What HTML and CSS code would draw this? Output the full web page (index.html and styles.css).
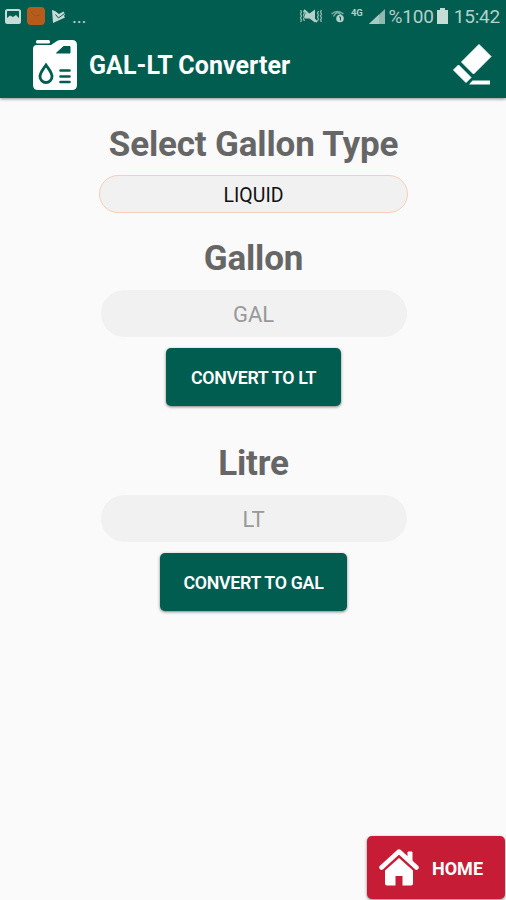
FILE: index.html
```html
<!DOCTYPE html>
<html lang="en">
<head>
  <meta charset="UTF-8">
  <meta name="viewport" content="width=device-width, initial-scale=1.0">
  <title>GAL-LT Converter</title>
  <link rel="stylesheet" href="styles.css">
</head>
<body>
  <header>
    <div class="status">
      <svg class="st-photo" width="16" height="15" viewBox="0 0 16 15"><rect x="1" y="1" width="14" height="13" rx="1.500" fill="none" stroke="#c5dcd7" stroke-width="2"/><path d="M2 9l3-2.500 3 1.500 3-2 3 3v5H2z" fill="#c5dcd7"/></svg>
      <svg class="st-app" width="18" height="18" viewBox="0 0 18 18"><rect width="18" height="18" rx="4" fill="#b75b1a"/><path d="M4 5l4 4 5-1" fill="none" stroke="#8b5a2b" stroke-width="1"/></svg>
      <svg class="st-play" width="14" height="15" viewBox="0 0 14 15"><path d="M0 1l3 1 4 3L11.500 2.500 13 5l-1 2 1 1.500L1 14z" fill="#c5dcd7"/><path d="M3.500 5.500L6.500 9l6-4.500" fill="none" stroke="#005d50" stroke-width="1"/></svg>
      <span class="dots">...</span>
      <span class="grow"></span>
      <svg class="st-mute" width="24" height="16" viewBox="0 0 24 16"><g fill="none" stroke="#8fb8b0" stroke-width="1.300"><path d="M1.500 2l1 2-1 2 1 2-1 2 1 2-1 2M4.500 3l1 2-1 2 1 2-1 2 1 2M19.500 3l-1 2 1 2-1 2 1 2-1 2M22.500 2l-1 2 1 2-1 2 1 2-1 2 1 2"/></g><path d="M6 5.500h4.500L16 1.500v13L10.500 10.500H6z" fill="#b3d0ca"/><path d="M5 2l13 12" stroke="#b3d0ca" stroke-width="2"/></svg>
      <svg class="st-wifi" width="14" height="13" viewBox="0 0 14 13"><g fill="none" stroke="#7fada5" stroke-width="1.500"><path d="M.5 4Q6.500-.8 12.500 4M2.500 6.500Q6-.2 10 5"/></g><circle cx="9" cy="8.500" r="3.800" fill="#b3d0ca"/><path d="M8 7h1.500v3.500" fill="none" stroke="#005d50"/></svg>
      <span class="net">4G</span>
      <svg class="st-signal" width="16" height="15" viewBox="0 0 16 15"><path d="M16 0v15H0z" fill="#8fb8b0"/><path d="M10 5.600V15H0z" fill="#a9cac3"/></svg>
      <span class="percent">%100</span>
      <svg class="st-battery" width="11" height="16" viewBox="0 0 11 16"><path d="M3 0h5v2h3v14H0V2h3z" fill="#c5dcd7"/></svg>
      <span class="clock">15:42</span>
    </div>
    <div class="toolbar">
      <svg class="jug" width="46" height="52" viewBox="0 0 46 52">
        <rect x="4" y="1" width="14" height="3.500" rx="1.500" fill="#fff"/>
        <path d="M5 6h14l6-4q1.500-1 3.500-1H40q5 0 5 5V46q0 5-5 5H6q-5 0-5-5V10q0-4 4-4z" fill="#fff"/>
        <path d="M24.500 14l7-6.500H38V14z" fill="#005d50" stroke="#005d50" stroke-linejoin="round"/>
        <path d="M14 26c3 4.500 6 7.500 6 11.500a6 6 0 0 1-12 0c0-4 3-7 6-11.500z" fill="none" stroke="#005d50" stroke-width="2.800"/>
        <path d="M28.500 31.500H37.500M28.500 37.500H37.500M28.500 43H37.500" stroke="#005d50" stroke-width="2.600" stroke-linecap="round"/>
      </svg>
      <h1>GAL-LT Converter</h1>
      <svg class="eraser" width="40" height="42" viewBox="0 0 40 42">
        <path d="M27 1.500L39 13.500 21.500 31 9.500 19z" fill="#fff" stroke="#fff" stroke-linejoin="round"/>
        <path d="M6.500 22L19 34.500l-5 5L1.500 27z" fill="#fff" stroke="#fff" stroke-linejoin="round"/>
        <path d="M20.500 37.500H38v4H17z" fill="#fff"/>
      </svg>
    </div>
  </header>

  <main>
    <h2>Select Gallon Type</h2>
    <button class="type">LIQUID</button>

    <h2 class="gallon">Gallon</h2>
    <input type="text" placeholder="GAL">
    <button class="convert to-lt">CONVERT TO LT</button>

    <h2 class="litre">Litre</h2>
    <input type="text" placeholder="LT">
    <button class="convert to-gal">CONVERT TO GAL</button>
  </main>

  <footer>
    <button class="home">
      <svg width="40" height="39" viewBox="0 0 40 39">
        <path d="M2.500 19.500L20 3.500l17.500 16" fill="none" stroke="#fff" stroke-width="4.500" stroke-linecap="round" stroke-linejoin="round"/>
        <path d="M29 4h4v10L29 10z" fill="#fff" stroke="#fff" stroke-linejoin="round"/>
        <path d="M20 10L34 22.500v13q0 2-2 2h-8.500V28h-7v9.500H8q-2 0-2-2v-13z" fill="#fff"/>
      </svg>
      <span>HOME</span>
    </button>
  </footer>
</body>
</html>
```
FILE: styles.css
```css
* {
  box-sizing: border-box;
}
body {
  margin: 0;
  height: 900px;
  display: flex;
  flex-direction: column;
  background: #fafafa;
  font-family: Roboto, "Liberation Sans", sans-serif;
}
header {
  height: 98px;
  background: #005d50;
  box-shadow: 0 1px 3px rgba(0, 0, 0, 0.45);
}
.status {
  height: 32px;
  display: flex;
  align-items: center;
  padding: 0 6px 0 5px;
  color: #b3d0ca;
  font-size: 19px;
  letter-spacing: -0.2px;
  white-space: nowrap;
}
.st-app {
  margin-left: 6px;
}
.st-play {
  margin-left: 7px;
}
.dots {
  margin-left: 6px;
}
.grow {
  flex: 1;
}
.st-wifi {
  margin-left: 8px;
}
.net {
  margin: -8px 0 0 6px;
  font-size: 9.5px;
  font-weight: bold;
}
.st-signal {
  margin-left: 6px;
}
.percent {
  margin-left: 4px;
}
.st-battery {
  margin-left: 3px;
}
.clock {
  margin-left: 6px;
}
.toolbar {
  height: 66px;
  display: flex;
  align-items: center;
  padding: 0 14px 0 32px;
}
h1 {
  flex: 1;
  margin: 1px 0 0 11px;
  color: #fff;
  font-size: 25px;
  font-weight: bold;
  letter-spacing: 0.05px;
}
.eraser {
  margin-top: -2px;
}
main {
  flex: 1;
  display: flex;
  flex-direction: column;
  align-items: center;
  padding: 25px 0 0 1px;
}
h2 {
  margin: 0;
  height: 42px;
  line-height: 43px;
  color: #666;
  font-size: 35px;
  font-weight: bold;
  letter-spacing: -0.15px;
}
button {
  font-family: inherit;
  border: none;
  cursor: pointer;
}
.type {
  width: 309px;
  height: 38px;
  margin-top: 10px;
  padding-top: 3px;
  border: 1px solid #f8cdbb;
  border-radius: 19px;
  background: #f1f1f1;
  color: #111;
  font-size: 19.5px;
}
.gallon {
  margin-top: 24px;
}
input {
  width: 306px;
  height: 47px;
  margin-top: 11px;
  padding: 2px 0 0;
  border: none;
  border-radius: 24px;
  background: #f1f1f1;
  font-family: inherit;
  font-size: 22px;
  text-align: center;
}
input::placeholder {
  color: #999;
}
.convert {
  height: 58px;
  margin-top: 11px;
  border-radius: 5px;
  background: #005d50;
  color: #fff;
  font-size: 17.8px;
  font-weight: 600;
  letter-spacing: -0.3px;
  box-shadow: 0 1px 3px rgba(0, 0, 0, 0.5);
}
.to-lt {
  width: 175px;
}
.to-gal {
  width: 187px;
}
.litre {
  margin-top: 36px;
}
footer {
  display: flex;
  justify-content: flex-end;
  padding: 0 1px 1px 0;
}
.home {
  display: flex;
  align-items: center;
  width: 138px;
  height: 63px;
  padding: 0 0 0 12px;
  border-radius: 5px;
  background: #c71c36;
  color: #fff;
  font-size: 18px;
  font-weight: bold;
  box-shadow: 0 1px 3px rgba(0, 0, 0, 0.5);
}
.home span {
  margin: 1px 0 0 13px;
}
```
